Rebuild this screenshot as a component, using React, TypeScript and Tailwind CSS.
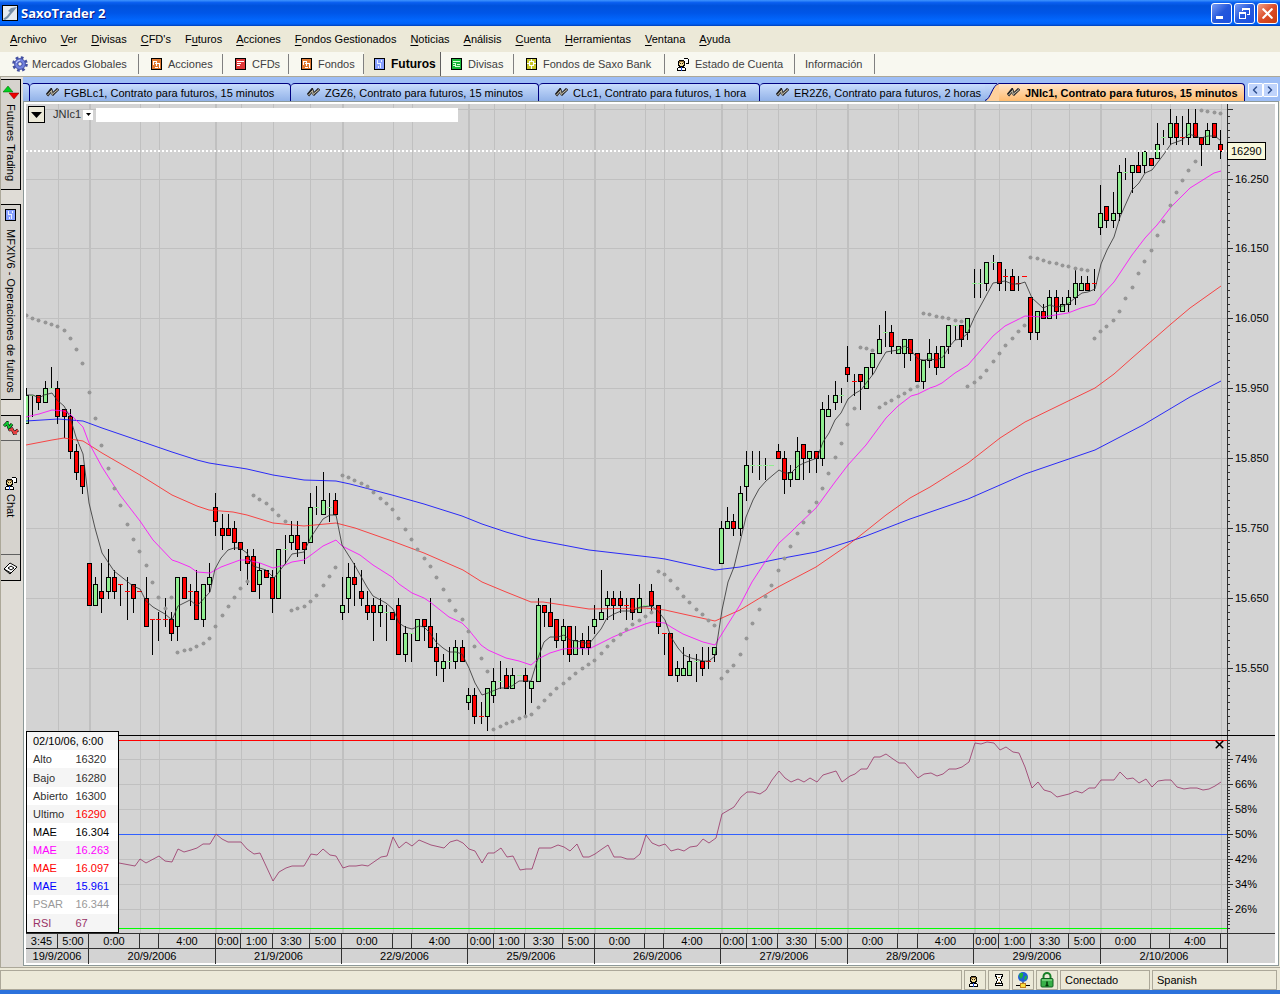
import type { ReactNode } from "react";
import { ChevronLeft, ChevronRight, X } from "lucide-react";

type Bar = [open: number, high: number, low: number, close: number];

// 15 minute bars, prices in tens (1594 = 15940)
const BARS: Bar[] = [
  [1590, 1595, 1590, 1594], [1594, 1594, 1591, 1594], [1594, 1594, 1592, 1593], [1593, 1596, 1593, 1595], [1595, 1598, 1595, 1595],
  [1595, 1596, 1590, 1591], [1592, 1592, 1588, 1591], [1591, 1592, 1585, 1586], [1586, 1587, 1582, 1583], [1584, 1584, 1580, 1581],
  // 20/9
  [1570, 1570, 1564, 1564], [1564, 1568, 1564, 1567], [1566, 1570, 1563, 1565], [1566, 1572, 1565, 1568], [1568, 1569, 1565, 1566],
  [1567, 1567, 1564, 1567], [1566, 1568, 1562, 1566], [1567, 1567, 1563, 1565], [1566, 1566, 1566, 1566], [1565, 1568, 1561, 1561],
  [1562, 1562, 1557, 1562], [1562, 1563, 1559, 1562], [1562, 1565, 1561, 1562], [1562, 1563, 1559, 1560], [1561, 1568, 1559, 1568],
  [1568, 1568, 1565, 1565], [1566, 1567, 1564, 1566], [1566, 1569, 1562, 1562], [1562, 1567, 1561, 1567], [1567, 1570, 1566, 1568],
  // 21/9
  [1578, 1580, 1574, 1576], [1575, 1577, 1572, 1574], [1575, 1577, 1574, 1574], [1575, 1576, 1572, 1573], [1573, 1573, 1569, 1572],
  [1571, 1572, 1567, 1570], [1571, 1572, 1566, 1566], [1567, 1570, 1565, 1569], [1569, 1569, 1568, 1568], [1568, 1569, 1563, 1565],
  [1565, 1572, 1565, 1572], [1572, 1574, 1570, 1572], [1573, 1576, 1572, 1574], [1574, 1576, 1571, 1572], [1573, 1573, 1570, 1572],
  [1573, 1580, 1573, 1578], [1578, 1581, 1577, 1578], [1577, 1583, 1577, 1579], [1578, 1580, 1576, 1578], [1579, 1580, 1577, 1577],
  // 22/9
  [1563, 1568, 1562, 1564], [1565, 1570, 1563, 1568], [1568, 1570, 1564, 1567], [1566, 1569, 1564, 1565], [1564, 1566, 1562, 1563],
  [1564, 1565, 1559, 1563], [1563, 1565, 1561, 1564], [1563, 1564, 1559, 1563], [1563, 1563, 1562, 1562], [1564, 1565, 1557, 1557],
  [1557, 1561, 1556, 1560], [1560, 1560, 1556, 1560], [1559, 1562, 1559, 1562], [1562, 1562, 1559, 1561], [1561, 1565, 1558, 1558],
  [1558, 1560, 1554, 1556], [1555, 1557, 1553, 1556], [1556, 1558, 1555, 1556], [1556, 1559, 1555, 1558], [1558, 1559, 1556, 1556],
  // 25/9
  [1550, 1552, 1549, 1551], [1551, 1552, 1547, 1548], [1548, 1550, 1547, 1548], [1548, 1552, 1546, 1552], [1551, 1555, 1550, 1553],
  [1553, 1556, 1552, 1553], [1554, 1555, 1552, 1552], [1552, 1555, 1552, 1554], [1554, 1554, 1554, 1554], [1554, 1555, 1548, 1553],
  [1552, 1553, 1550, 1553], [1553, 1565, 1553, 1564], [1564, 1564, 1561, 1563], [1563, 1565, 1561, 1561], [1562, 1562, 1558, 1559],
  [1559, 1562, 1557, 1561], [1561, 1561, 1556, 1557], [1557, 1561, 1557, 1559], [1559, 1560, 1557, 1558], [1559, 1561, 1557, 1558],
  // 26/9
  [1561, 1564, 1560, 1562], [1562, 1569, 1562, 1563], [1564, 1566, 1562, 1565], [1565, 1566, 1562, 1564], [1565, 1566, 1563, 1564],
  [1564, 1565, 1562, 1564], [1565, 1565, 1562, 1563], [1563, 1567, 1563, 1565], [1564, 1564, 1564, 1564], [1566, 1567, 1563, 1564],
  [1564, 1564, 1560, 1561], [1560, 1560, 1557, 1560], [1560, 1560, 1554, 1554], [1554, 1556, 1553, 1555], [1554, 1558, 1554, 1555],
  [1554, 1557, 1554, 1556], [1556, 1557, 1553, 1556], [1556, 1558, 1554, 1555], [1556, 1558, 1555, 1556], [1557, 1558, 1556, 1558],
  // 27/9
  [1570, 1576, 1570, 1575], [1575, 1578, 1575, 1576], [1576, 1577, 1574, 1575], [1575, 1581, 1574, 1580], [1581, 1586, 1579, 1584],
  [1584, 1586, 1583, 1584], [1584, 1586, 1582, 1584], [1584, 1585, 1582, 1584], [1584, 1584, 1584, 1584], [1586, 1587, 1585, 1585],
  [1585, 1586, 1580, 1582], [1582, 1584, 1581, 1583], [1582, 1588, 1582, 1586], [1587, 1587, 1582, 1585], [1585, 1586, 1583, 1586],
  [1586, 1586, 1583, 1585], [1585, 1593, 1584, 1592], [1591, 1594, 1591, 1592], [1593, 1596, 1592, 1594], [1594, 1595, 1593, 1594],
  // 28/9
  [1598, 1601, 1596, 1597], [1596, 1597, 1594, 1596], [1597, 1597, 1592, 1596], [1595, 1598, 1595, 1598], [1598, 1600, 1597, 1600],
  [1600, 1604, 1600, 1602], [1603, 1606, 1601, 1603], [1603, 1604, 1600, 1601], [1600, 1601, 1600, 1601], [1600, 1602, 1598, 1602],
  [1602, 1602, 1599, 1600], [1600, 1600, 1596, 1596], [1596, 1599, 1595, 1599], [1599, 1602, 1598, 1600], [1600, 1601, 1597, 1598],
  [1598, 1601, 1598, 1601], [1601, 1604, 1600, 1604], [1604, 1604, 1602, 1604], [1604, 1604, 1601, 1602], [1603, 1605, 1602, 1605],
  // 29/9
  [1610, 1612, 1608, 1610], [1610, 1612, 1608, 1610], [1610, 1613, 1609, 1613], [1613, 1614, 1612, 1613], [1613, 1613, 1609, 1610],
  [1611, 1612, 1609, 1611], [1611, 1612, 1609, 1609], [1610, 1611, 1609, 1610], [1611, 1611, 1611, 1611], [1608, 1608, 1602, 1603],
  [1603, 1606, 1602, 1606], [1606, 1607, 1605, 1605], [1605, 1609, 1605, 1608], [1608, 1609, 1605, 1606], [1606, 1608, 1606, 1607],
  [1607, 1609, 1606, 1608], [1608, 1612, 1607, 1610], [1609, 1611, 1609, 1610], [1610, 1611, 1609, 1609], [1610, 1612, 1609, 1610],
  // 2/10
  [1618, 1624, 1617, 1620], [1621, 1621, 1618, 1619], [1619, 1623, 1618, 1620], [1620, 1627, 1619, 1626], [1626, 1628, 1625, 1626],
  [1626, 1627, 1623, 1627], [1627, 1629, 1626, 1626], [1627, 1629, 1626, 1629], [1628, 1628, 1627, 1627], [1628, 1633, 1628, 1630],
  [1631, 1632, 1630, 1631], [1631, 1635, 1630, 1633], [1633, 1634, 1630, 1631], [1631, 1634, 1630, 1631], [1631, 1635, 1630, 1633],
  [1633, 1635, 1631, 1631], [1631, 1631, 1627, 1630], [1630, 1633, 1630, 1632], [1633, 1633, 1631, 1631], [1630, 1632, 1628, 1629],
];

// parabolic SAR, one dot for each bar
const PSAR = [
  315, 318, 320, 322, 324, 326, 330, 338, 349, 363, 392, 418, 445, 468, 488, 505, 524, 539, 551, 565,
  582, 597, 608, 597, 652, 650, 649, 646, 643, 638, 626, 615, 606, 597, 588, 581, 495, 499, 503, 509,
  515, 521, 610, 608, 606, 601, 595, 585, 576, 567, 475, 477, 480, 483, 486, 492, 498, 503, 509, 518,
  529, 539, 549, 558, 566, 577, 589, 600, 610, 619, 631, 646, 658, 671, 729, 726, 723, 721, 718, 716,
  714, 707, 700, 694, 688, 683, 678, 673, 668, 664, 660, 653, 646, 640, 634, 629, 624, 620, 616, 612,
  571, 574, 580, 588, 596, 602, 609, 614, 620, 625, 678, 671, 665, 654, 638, 623, 609, 596, 585, 570,
  558, 546, 533, 522, 511, 502, 488, 473, 457, 443, 424, 408, 347, 348, 350, 407, 403, 400, 396, 393,
  389, 386, 313, 314, 316, 317, 318, 320, 321, 386, 382, 377, 370, 361, 353, 345, 338, 331, 325, 257,
  258, 260, 262, 263, 265, 266, 268, 269, 270, 338, 331, 326, 320, 311, 298, 287, 273, 261, 250, 235,
  221, 205, 192, 180, 170, 161, 110, 111, 112, 113,
];

const AVERAGES = [
  {
    color: "#0000ff",
    points:
      "26,421 58,419 83,421 102,428 140,441 172,452 197,460 209,463 247,469 273,475 304,480 336,481 350,484 392,495 424,504 462,516 482,524 506,532 531,539 563,545 589,550 658,558 665,559 683,563 715,570 740,567 778,559 816,552 848,542 866,536 910,519 968,499 1000,485 1025,474 1095,450 1143,425 1190,397 1221,381",
  },
  {
    color: "#ff2020",
    points:
      "26,445 52,440 64,438 70,439 83,441 102,453 140,475 172,495 197,506 209,510 233,512 247,515 273,523 304,526 336,523 355,528 392,541 424,553 463,570 482,582 506,592 531,602 543,602 563,605 589,609 645,608 665,610 683,614 715,621 740,610 778,587 816,567 848,545 866,531 886,515 910,498 930,487 968,463 1000,438 1025,422 1095,388 1114,374 1132,358 1171,324 1190,308 1221,286",
  },
  {
    color: "#ff00ff",
    points:
      "26,417 39,414 52,410 64,411 70,414 83,427 89,443 102,467 120,495 140,521 153,540 172,560 178,562 190,567 197,572 210,573 221,567 240,560 247,560 260,563 273,568 285,565 292,562 304,560 311,555 323,546 336,540 342,546 360,555 373,565 392,577 399,584 412,593 424,598 430,602 449,617 462,623 468,629 481,645 488,650 506,658 519,661 531,665 538,659 544,656 550,653 563,649 575,648 589,649 601,643 613,637 627,631 645,624 652,622 665,623 671,627 683,634 703,642 715,645 728,624 740,605 752,582 765,562 779,543 791,532 798,525 816,508 835,482 848,465 866,445 886,418 898,406 911,396 918,394 930,388 936,386 942,383 955,373 968,365 981,350 993,336 1005,326 1025,316 1043,317 1068,313 1081,308 1095,304 1101,296 1114,282 1132,255 1145,238 1157,225 1171,207 1182,196 1190,188 1214,173 1221,171",
  },
  {
    color: "#303030",
    points:
      "26,395 33,395 39,398 44,395 52,393 57,400 64,406 70,417 76,437 83,454 89,503 95,528 102,553 114,571 133,586 140,589 146,601 153,607 158,610 165,614 172,620 178,606 190,600 197,606 210,592 215,569 221,558 228,550 234,548 240,548 247,553 253,566 266,570 274,578 285,564 292,554 304,552 311,537 323,519 330,515 336,515 342,545 354,564 367,587 373,596 386,603 393,609 399,623 405,627 412,629 419,626 424,627 430,633 436,642 443,648 449,652 456,652 462,654 469,668 475,683 482,695 488,693 500,688 506,688 512,686 519,681 531,681 538,658 544,642 550,637 558,637 564,635 570,640 582,642 589,644 601,629 607,618 614,614 621,611 633,611 640,607 652,606 658,611 665,620 671,637 678,648 684,655 691,658 703,661 709,661 715,656 722,610 728,582 734,567 740,542 746,517 753,500 759,489 766,481 773,475 779,470 785,473 791,473 798,466 804,463 817,458 823,442 829,433 835,420 841,413 848,399 854,394 861,390 867,382 874,373 880,362 886,352 898,350 905,346 910,349 918,359 924,360 930,359 937,360 943,357 949,347 955,340 961,339 967,334 975,316 981,305 993,283 1005,281 1012,284 1019,284 1025,282 1032,298 1043,308 1050,305 1056,307 1063,306 1069,303 1075,298 1082,293 1088,292 1095,289 1101,264 1107,250 1114,237 1120,217 1132,190 1139,183 1145,173 1152,170 1158,162 1164,154 1171,144 1182,140 1189,134 1201,138 1208,136 1215,136 1221,141",
  },
];

const RSI =
  "119,863 135,866 140,859 146,863 159,856 165,861 172,862 178,849 184,852 191,850 197,848 203,844 210,844 216,834 222,839 228,842 241,842 247,849 254,854 260,853 273,881 279,872 286,868 292,866 304,866 311,854 317,855 323,849 330,855 336,856 343,868 349,866 356,866 362,865 368,866 381,857 387,856 393,837 399,848 406,842 412,846 419,840 431,845 444,848 450,842 457,840 463,843 469,849 475,851 482,863 488,853 494,853 501,848 507,857 513,856 520,870 526,869 532,869 539,848 551,848 558,845 564,847 570,851 577,844 583,857 589,857 595,854 602,849 608,845 614,857 621,857 627,859 634,859 640,854 646,835 652,843 659,846 665,844 671,851 678,849 684,851 690,847 697,846 703,839 709,843 716,838 722,814 734,807 741,797 747,792 753,792 760,794 766,790 772,780 779,771 785,778 791,782 798,779 804,782 810,778 817,782 823,775 836,771 842,782 850,776 855,774 861,769 867,769 874,757 880,757 886,754 893,759 899,763 905,763 918,778 924,774 931,773 937,776 943,774 949,769 956,769 962,767 969,762 975,743 981,744 987,742 994,743 1000,750 1006,747 1013,752 1019,753 1025,767 1032,788 1038,782 1044,790 1051,792 1057,797 1069,794 1076,791 1082,793 1089,788 1095,788 1101,780 1114,780 1120,772 1127,779 1133,778 1139,783 1146,779 1152,787 1158,781 1165,780 1171,780 1177,787 1184,789 1190,788 1197,788 1203,790 1209,789 1215,786 1221,782";

const DAY_LINES = [90, 216, 343, 469, 595, 722, 848, 975, 1101];
const HOUR_LINES = [58, 140, 159, 241, 273, 310, 393, 412, 494, 525, 563, 645, 664, 747, 778, 816, 898, 918, 999, 1031, 1069, 1151, 1170, 1221];

const PRICES = [1625, 1615, 1605, 1595, 1585, 1575, 1565, 1555];
const PERCENTS = [74, 66, 58, 50, 42, 34, 26];

const HOURS = [
  "3:45", "5:00", "0:00", "", "4:00", "0:00", "1:00", "3:30", "5:00", "0:00", "", "4:00", "0:00", "1:00", "3:30", "5:00", "0:00",
  "", "4:00", "0:00", "1:00", "3:30", "5:00", "0:00", "", "4:00", "0:00", "1:00", "3:30", "5:00", "0:00", "", "4:00", "",
];
const DAYS = ["19/9/2006", "20/9/2006", "21/9/2006", "22/9/2006", "25/9/2006", "26/9/2006", "27/9/2006", "28/9/2006", "29/9/2006", "2/10/2006"];

const priceY = (p: number) => Math.floor(179 + (1625 - p) * 6.986);
const percentY = (p: number) => Math.floor(759 + (74 - p) * 3.13);
const barX = (i: number) => Math.floor(89.3 + (i - 10) * 6.32);

const MENU = [
  ["", "A", "rchivo"], ["", "V", "er"], ["", "D", "ivisas"], ["", "C", "FD's"], ["F", "u", "turos"], ["", "A", "cciones"],
  ["", "F", "ondos Gestionados"], ["", "N", "oticias"], ["", "A", "nálisis"], ["", "C", "uenta"], ["", "H", "erramientas"],
  ["", "V", "entana"], ["", "A", "yuda"],
];

const READOUT = [
  ["Alto", "16320", "text-[#303030]", "text-[#303030]"],
  ["Bajo", "16280", "text-[#303030]", "text-[#303030]"],
  ["Abierto", "16300", "text-[#303030]", "text-[#303030]"],
  ["Ultimo", "16290", "text-[#303030]", "text-[#ff0000]"],
  ["MAE", "16.304", "text-black", "text-black"],
  ["MAE", "16.263", "text-[#ff00ff]", "text-[#ff00ff]"],
  ["MAE", "16.097", "text-[#ff0000]", "text-[#ff0000]"],
  ["MAE", "15.961", "text-[#0000ff]", "text-[#0000ff]"],
  ["PSAR", "16.344", "text-[#999999]", "text-[#999999]"],
  ["RSI", "67", "text-[#993366]", "text-[#993366]"],
];

function GearIcon() {
  return (
    <svg width="16" height="16" viewBox="0 0 16 16">
      <circle cx="8" cy="8" r="6.3" fill="none" stroke="#4450a0" strokeWidth="3" strokeDasharray="2.6 2.35" />
      <circle cx="8" cy="8" r="5.4" fill="#7484e0" stroke="#4854a8" />
      <circle cx="8" cy="8" r="2.2" fill="#f8f8f0" stroke="#38449c" />
      <path d="M4.2 7A4 4 0 0 1 8 4.2" stroke="#c8d0ff" fill="none" />
    </svg>
  );
}

function SquareIcon({ fill, line, d }: { fill: string; line: string; d: string }) {
  return (
    <svg width="11" height="12" viewBox="0 0 11 12" shapeRendering="crispEdges">
      <rect x="0.5" y="0.5" width="10" height="11" fill={fill} stroke="#000" />
      <path d={d} stroke={line} fill="none" />
    </svg>
  );
}

const FundIcon = () => <SquareIcon fill="#e07830" line="#fff" d="M2 3.5h4M2.5 3v4M5.5 4v4M4 5.5h5M8.5 5v5M4 9.5h3" />;
const CfdIcon = () => <SquareIcon fill="#e03838" line="#fff" d="M2 3.5h7M2 5.5h4M2 7.5h3" />;
const FutureIcon = () => <SquareIcon fill="#88a0ff" line="#e8f0ff" d="M3.5 2v4M4 5.5h3M6.5 5v5M7.5 2v2M4.5 8v2" />;
const ForexIcon = () => <SquareIcon fill="#18b838" line="#d8ffd8" d="M2 3.5h7M2 5.5h3M4.5 5v4M5 8.5h4M6 6.5h3M2 7.5h2" />;
const SaxoFundIcon = () => <SquareIcon fill="#c8c828" line="#fff" d="M3.5 3.5h4v4h-4zM5.5 1v2M5.5 8v3M1 5.5h2M8 5.5h2" />;

function PersonIcon({ note = false }: { note?: boolean }) {
  return (
    <svg width="12" height="13" viewBox="0 0 12 13" shapeRendering="crispEdges">
      {note && <path d="M6.500 0.500h4l1 1v4h-3" fill="#fff" stroke="#000" />}
      <path d="M2 2h5v1h1v5h-1v1h-5v-1h-1v-5h1z" fill="#000" />
      <path d="M2 3h5v2h-5z" fill="#806030" />
      <path d="M3 4h3v4h-3zM2 5h5v2h-5z" fill="#f0d890" />
      <path d="M3 5h1v1h-1zM5 5h1v1h-1z" fill="#302010" />
      <path d="M0 13v-3h1v-1h7v1h1v3z" fill="#000" />
      <path d="M1 12v-2h7v2z" fill="#fff" />
      <path d="M4 9h1v4h-1z" fill="#2050e0" />
    </svg>
  );
}

function StripesIcon() {
  return (
    <svg width="14" height="9" viewBox="0 0 14 9">
      <path d="M1 7l4-5 1 3M6 7l6-6" stroke="#202020" strokeWidth="3" fill="none" />
      <path d="M1.5 8l4-5 1 3 6-5" stroke="#404040" strokeWidth="2" fill="none" />
      <path d="M1.500 7l4-4.500 0.500 4 6-5" stroke="#c8c0a8" strokeWidth="1" fill="none" />
    </svg>
  );
}

const TOOLS: { label: string; icon?: ReactNode; width: string; active?: boolean }[] = [
  { label: "Mercados Globales", icon: <GearIcon />, width: "w-[139px] gap-1 pl-3" },
  { label: "Acciones", icon: <FundIcon />, width: "w-[84px] gap-1.5 pl-3" },
  { label: "CFDs", icon: <CfdIcon />, width: "w-[66px] gap-1.5 pl-3" },
  { label: "Fondos", icon: <FundIcon />, width: "w-[75px] gap-1.5 pl-3" },
  { label: "Futuros", icon: <FutureIcon />, width: "w-[77px] gap-1.5 pl-2.5", active: true },
  { label: "Divisas", icon: <ForexIcon />, width: "w-[73px] gap-1.5 pl-2.5" },
  { label: "Fondos de Saxo Bank", icon: <SaxoFundIcon />, width: "w-[151px] gap-1.5 pl-3" },
  { label: "Estado de Cuenta", icon: <PersonIcon note />, width: "w-[130px] gap-1.5 pl-3" },
  { label: "Información", width: "w-[80px] pl-2.5" },
];

const TABS = [
  { label: "FGBLc1, Contrato para futuros, 15 minutos", width: "w-[261px]" },
  { label: "ZGZ6, Contrato para futuros, 15 minutos", width: "w-[248px]" },
  { label: "CLc1, Contrato para futuros, 1 hora", width: "w-[221px]" },
  { label: "ER2Z6, Contrato para futuros, 2 horas", width: "w-[225px]" },
];

function TitleBar() {
  const button = "flex size-[21px] items-center justify-center rounded-[3px] border border-white";
  return (
    <header className="flex h-[26px] items-center bg-[linear-gradient(#3f95fe_0%,#0a5ff0_10%,#0052dc_22%,#0056e8_50%,#0268ff_80%,#0062f8_92%,#0040b8_100%)] pr-[2px] pl-[2px]">
      <svg width="16" height="16" viewBox="0 0 16 16">
        <rect x="0.5" y="0.5" width="15" height="15" fill="#e4eaf0" stroke="#000" />
        <path d="M1 14l4-3 3-4-2-1 3-3 6-1-4 5-1 1-4 5-3 2z" fill="#7890a8" />
      </svg>
      <h1 className="ml-[3px] flex-1 font-['Open_Sans',sans-serif] text-[13px] leading-5 font-bold text-white [text-shadow:1px_1px_#0a1883]">SaxoTrader 2</h1>
      <div className="flex gap-[2px]">
        <button aria-label="Minimizar" className={`${button} bg-[linear-gradient(135deg,#7a9cf4,#2458dc_50%,#1c50e0)]`}>
          <span className="mt-2 mr-1 h-[3px] w-[7px] bg-white" />
        </button>
        <button aria-label="Restaurar" className={`${button} bg-[linear-gradient(135deg,#7a9cf4,#2458dc_50%,#1c50e0)]`}>
          <svg width="13" height="13" viewBox="0 0 13 13" fill="none" stroke="#fff" shapeRendering="crispEdges">
            <path d="M4.5 4v-2.5h7v6h-3M4 2.500h8" />
            <path d="M1.5 5.5h6v6h-6zM1 6.5h7" />
          </svg>
        </button>
        <button aria-label="Cerrar" className={`${button} bg-[linear-gradient(135deg,#f0a088,#dc4c28_50%,#c83c10)] text-white`}>
          <X size={17} strokeWidth={3} />
        </button>
      </div>
    </header>
  );
}

function Toolbar() {
  return (
    <nav className="flex h-[25px] border-b border-[#aca899] bg-[#f8f8f0]">
      {TOOLS.map((tool) => (
        <button
          key={tool.label}
          className={`flex shrink-0 items-center whitespace-nowrap ${tool.width} ${
            tool.active
              ? "border-r border-[#606060] bg-[#ece9d8] text-[12px] font-bold text-black"
              : "my-[2px] border-r border-[#808080] text-[#404040]"
          }`}
        >
          {tool.icon}
          {tool.label}
        </button>
      ))}
    </nav>
  );
}

function Sidebar() {
  const tab = "flex w-5 items-center border border-l-0 border-black bg-[#d6d3ce] [writing-mode:vertical-rl]";
  return (
    <aside className="flex w-[23px] shrink-0 flex-col border-l border-[#aca899] bg-[#dfdcd6] pt-0.5">
      <button className={`${tab} h-[111px] gap-1 pt-1`}>
        <svg width="16" height="16" viewBox="0 0 16 16">
          <path d="M0 8l5-6 5 6z" fill="#00d020" stroke="#006000" strokeWidth="0.5" />
          <path d="M6 9h10l-5 6z" fill="#f00000" stroke="#700000" strokeWidth="0.5" />
        </svg>
        Futures Trading
      </button>
      <button className={`${tab} mt-3.5 h-[196px] gap-2 pt-1`}>
        <FutureIcon />
        MFXIV6 - Operaciones de futuros
      </button>
      <div className="mt-[15px] flex w-5 flex-col border border-l-0 border-black bg-[#d6d3ce]">
        <button aria-label="Operaciones" className="flex h-[25px] items-center justify-center border-b border-[#606060]">
          <svg width="16" height="14" viewBox="0 0 16 14" fill="none">
            <path d="M1 5l3-3 2 5 3-4M3 2h3" stroke="#000" strokeWidth="3" />
            <path d="M1 5l3-3 2 5 3-4M3 2h3" stroke="#10c030" strokeWidth="2" />
            <path d="M6 9l3-1 2 4 4-3M10 12h4" stroke="#000" strokeWidth="3" />
            <path d="M6 9l3-1 2 4 4-3M10 12h4" stroke="#e84040" strokeWidth="2" />
          </svg>
        </button>
        <button className="flex h-[114px] items-center justify-center gap-1 border-b border-[#606060] [writing-mode:vertical-rl]">
          <PersonIcon note />
          Chat
        </button>
        <button aria-label="Notas" className="flex h-[25px] items-center justify-center">
          <svg width="15" height="14" viewBox="0 0 15 14">
            <path d="M1 8l6-6 7 4-6 6z" fill="#fff" stroke="#000" />
            <path d="M5 7l3-2 3 2-3 2zM1 8l6 5 1-1" fill="none" stroke="#000" />
          </svg>
        </button>
      </div>
    </aside>
  );
}

function ChartTabs() {
  const arrow = "flex h-[14px] w-[15px] items-center justify-center rounded-[1px] border border-white bg-[#c0d4fc] text-[#305090]";
  return (
    <nav className="flex h-[24px] items-end overflow-hidden bg-[#9ebef6] pt-1.5">
      <div className="h-full w-[7px] shrink-0 rounded-tr-[4px] border-t border-r border-[#000080] bg-[linear-gradient(#c4d8fa,#96b6ea)]" />
      {TABS.map((tab, i) => (
        <button
          key={tab.label}
          className={`flex h-full shrink-0 items-center gap-1 overflow-hidden rounded-tl-[4px] border-t border-[#000080] bg-[linear-gradient(#c8dcfc,#92b2e8)] pl-4 whitespace-nowrap ${tab.width} ${
            i < TABS.length - 1 ? "rounded-tr-[4px] border-r" : ""
          }`}
        >
          <StripesIcon />
          {tab.label}
        </button>
      ))}
      <button className="flex h-full min-w-0 flex-1 items-stretch text-left font-bold whitespace-nowrap">
        <svg width="14" height="18" viewBox="0 0 14 18" className="shrink-0 bg-[linear-gradient(#c8dcfc,#92b2e8)]">
          <path d="M1 18C6 15 8 2 14 0.5V18z" fill="#ffd09c" />
          <path d="M0 0.5h12M0 17.5C6 16 7 2 14 0.5" fill="none" stroke="#000080" />
        </svg>
        <span className="flex min-w-0 flex-1 items-center gap-1 rounded-tr-[4px] border-t border-r border-[#000080] bg-[linear-gradient(#ffe4c8,#ffbc70)] pl-2">
          <StripesIcon />
          JNIc1, Contrato para futuros, 15 minutos
        </span>
      </button>
      <div className="flex h-full w-[35px] shrink-0 justify-center">
        <button aria-label="Anterior" className={arrow}><ChevronLeft size={12} strokeWidth={3} /></button>
        <button aria-label="Siguiente" className={arrow}><ChevronRight size={12} strokeWidth={3} /></button>
      </div>
    </nav>
  );
}

function GridColumns({ top, bottom }: { top: number; bottom: number }) {
  return (
    <g stroke="#c0c0c0" shapeRendering="crispEdges">
      {DAY_LINES.map((x) => <line key={x} x1={x} x2={x} y1={top} y2={bottom} strokeWidth="2" />)}
      {HOUR_LINES.map((x) => <line key={x} x1={x + 0.5} x2={x + 0.5} y1={top} y2={bottom} />)}
    </g>
  );
}

function PricePlot() {
  // a bar that closes where it opened keeps the colour of the bar before it
  let up = true;
  const candles = BARS.map(([open, high, low, close], i) => {
    if (close !== open) up = close > open;
    const x = barX(i);
    const top = priceY(Math.max(open, close));
    const bottom = priceY(Math.min(open, close));
    const fill = up ? "#90ee90" : "#ff0000";
    return (
      <g key={i}>
        {high !== low && <rect x={x} y={priceY(high)} width="1" height={priceY(low) - priceY(high) + 1} fill="#000" />}
        {open === close ? (
          <rect x={x - 2} y={top} width="5" height="1" fill={fill} />
        ) : (
          <rect x={x - 1.5} y={top + 0.5} width="4" height={bottom - top} fill={fill} stroke="#000" />
        )}
      </g>
    );
  });

  return (
    <svg className="h-[631px] min-w-0 flex-1" viewBox="26 104 1201 631" preserveAspectRatio="none">
      <GridColumns top={104} bottom={735} />
      <g fill="#c0c0c0" shapeRendering="crispEdges">
        {[1635, ...PRICES].map((p) => <rect key={p} x="26" y={priceY(p)} width="1201" height="1" />)}
      </g>
      <g shapeRendering="crispEdges">{candles}</g>
      {AVERAGES.map((line) => (
        <polyline key={line.color} points={line.points} fill="none" stroke={line.color} strokeWidth="1" strokeOpacity="0.8" />
      ))}
      <g fill="#969696">
        {PSAR.map((y, i) => <circle key={i} cx={barX(i) + 0.5} cy={y + 0.5} r="2" />)}
      </g>
      <line x1="26" x2="1227" y1="151" y2="151" stroke="#fff" strokeWidth="2" strokeDasharray="2 2" shapeRendering="crispEdges" />
    </svg>
  );
}

function PriceAxis() {
  const minor = Array.from({ length: 90 }, (_, i) => priceY(1635 - i));
  return (
    <svg className="h-[631px] w-12 shrink-0" viewBox="1227 104 48 631">
      <g fill="#303030" shapeRendering="crispEdges">
        <rect x="1227" y="104" width="1" height="631" />
        {minor.map((y) => <rect key={y} x="1228" y={y} width="2" height="1" />)}
        {[1635, ...PRICES].map((p) => <rect key={p} x="1228" y={priceY(p)} width="5" height="1" />)}
      </g>
      {PRICES.map((p) => (
        <text key={p} x="1235" y={priceY(p) + 4} className="text-[11px]">{(p / 100).toFixed(2)}0</text>
      ))}
      <rect x="1227.5" y="142.5" width="38" height="17" fill="#f8f8dc" stroke="#000" shapeRendering="crispEdges" />
      <text x="1231" y="155" className="text-[11px]">16290</text>
    </svg>
  );
}

function RsiPlot() {
  return (
    <svg className="h-[197px] min-w-0 flex-1" viewBox="26 736 1201 197" preserveAspectRatio="none">
      <GridColumns top={736} bottom={933} />
      <g shapeRendering="crispEdges">
        {PERCENTS.map((p) => (
          <rect key={p} x="26" y={percentY(p)} width="1201" height="1" fill={p === 50 ? "#3060ff" : "#c0c0c0"} />
        ))}
        <rect x="26" y="740" width="1201" height="1" fill="#ff0000" />
        <rect x="26" y="928" width="1201" height="1" fill="#00ff00" />
      </g>
      <polyline points={RSI} fill="none" stroke="#993366" strokeWidth="1" strokeOpacity="0.8" />
    </svg>
  );
}

function RsiAxis() {
  const minor = Array.from({ length: 61 }, (_, i) => percentY(80 - i));
  return (
    <svg className="h-[197px] w-12 shrink-0" viewBox="1227 736 48 197">
      <g fill="#303030" shapeRendering="crispEdges">
        <rect x="1227" y="736" width="1" height="197" />
        {minor.map((y) => <rect key={y} x="1228" y={y} width="2" height="1" />)}
        {PERCENTS.map((p) => <rect key={p} x="1228" y={percentY(p)} width="5" height="1" />)}
      </g>
      {PERCENTS.map((p) => (
        <text key={p} x="1235" y={percentY(p) + 4} className="text-[11px]">{p}%</text>
      ))}
    </svg>
  );
}

function TimeAxis() {
  return (
    <div className="flex border-t border-[#303030] text-center">
      <div className="min-w-0 flex-1">
        <div className="grid h-[15px] grid-cols-[32fr_31fr_51fr_19fr_57fr_25fr_32fr_37fr_32fr_51fr_19fr_56fr_26fr_31fr_38fr_32fr_50fr_19fr_57fr_26fr_31fr_38fr_32fr_50fr_20fr_56fr_25fr_32fr_38fr_32fr_50fr_19fr_51fr_6fr] border-b border-[#303030] leading-[14px]">
          {HOURS.map((hour, i) => (
            <div key={i} className={`min-w-0 ${i < HOURS.length - 1 ? "border-r border-[#303030]" : ""}`}>{hour}</div>
          ))}
        </div>
        <div className="grid h-[14px] grid-cols-[63fr_127fr_126fr_126fr_127fr_126fr_127fr_126fr_127fr_126fr] leading-[15px]">
          {DAYS.map((day, i) => (
            <div key={day} className={`min-w-0 ${i < DAYS.length - 1 ? "border-r border-[#303030]" : ""}`}>{day}</div>
          ))}
        </div>
      </div>
      <div className="w-12 shrink-0 border-l border-[#303030]" />
    </div>
  );
}

function Readout() {
  return (
    <table className="absolute bottom-0 left-0 h-[202px] w-[93px] border border-black bg-white">
      <tbody>
        <tr className="bg-[#f5f5f5]">
          <th colSpan={2} className="pl-1.5 text-left font-normal">02/10/06, 6:00</th>
        </tr>
        {READOUT.map(([label, value, labelColor, valueColor], i) => (
          <tr key={i} className="odd:bg-[#f5f5f5]">
            <th scope="row" className={`w-[49px] pl-1.5 text-left font-normal ${labelColor}`}>{label}</th>
            <td className={valueColor}>{value}</td>
          </tr>
        ))}
      </tbody>
    </table>
  );
}

function Chart() {
  return (
    <section className="relative border-2 border-r-3 border-white bg-[#d3d3d3]">
      <div className="flex border-b border-black">
        <PricePlot />
        <PriceAxis />
      </div>
      <div className="relative flex">
        <RsiPlot />
        <RsiAxis />
        <Readout />
        <button aria-label="Quitar RSI" className="absolute top-0.5 right-[49px] text-black">
          <X size={13} strokeWidth={3} />
        </button>
      </div>
      <TimeAxis />
      <div className="absolute top-0.5 left-0.5 flex items-center">
        <button aria-label="Opciones del gráfico" className="flex size-[17px] items-center justify-center border border-black bg-[#ece9d8]">
          <svg width="11" height="6" viewBox="0 0 11 6"><path d="M0 0h11L5.5 6z" /></svg>
        </button>
        <label htmlFor="symbol" className="w-[38px] pl-2 leading-[13px] text-[#303030]">JNIc1</label>
        <button aria-label="Elegir instrumento" className="flex h-2.5 w-2.5 items-center justify-center bg-white">
          <svg width="5" height="3" viewBox="0 0 5 3"><path d="M0 0h5L2.5 3z" /></svg>
        </button>
        <input id="symbol" type="text" className="ml-[3px] h-3.5 w-[362px] bg-white px-1 outline-none" />
      </div>
    </section>
  );
}

function StatusBar() {
  const cell = "flex h-5 items-center border border-[#aca899]";
  const iconCell = `${cell} w-[22px] justify-center`;
  return (
    <footer className="flex gap-[2px] border-t border-[#aca899] bg-[#ece9d8] pt-[2px] pr-[3px]">
      <div className={`${cell} flex-1`} />
      <div className={iconCell}><PersonIcon /></div>
      <div className={iconCell}>
        <svg width="8" height="12" viewBox="0 0 8 12" shapeRendering="crispEdges">
          <path d="M0 0h8v3h-1v2h-1v2h1v2h1v3h-8v-3h1v-2h1v-2h-1v-2h-1z" fill="#000" />
          <path d="M1 1h6v1h-6zM2 2h4v3h-1v2h1v2h-4v-2h1v-2h-1zM1 10h6v1h-6z" fill="#fff" />
          <path d="M3 3h2v1h-2zM3 8h2v1h-2z" fill="#a08040" />
        </svg>
      </div>
      <div className={iconCell}>
        <svg width="14" height="16" viewBox="0 0 14 16">
          <circle cx="7" cy="5" r="5" fill="#2060d8" />
          <path d="M4 1l3 0 0 3-2 3-2-3zM9 4l2 0-1 4-2-1z" fill="#20b040" />
          <path d="M7 10v2M0 13.5h14" stroke="#000" />
          <rect x="4.5" y="11.5" width="5" height="4" fill="#f8e040" stroke="#c08020" />
        </svg>
      </div>
      <div className={iconCell}>
        <svg width="14" height="16" viewBox="0 0 14 16">
          <path d="M3.5 7V4.5a3.5 3.5 0 0 1 7 0V7" fill="none" stroke="#188028" strokeWidth="2" />
          <rect x="1" y="6.5" width="12" height="8.5" rx="1" fill="#38b048" stroke="#106020" />
          <path d="M2 8h10" stroke="#a0e8a0" />
          <path d="M7 9.5v4M5.5 13.5h3" stroke="#003808" strokeWidth="1.5" />
        </svg>
      </div>
      <div className={`${cell} w-[90px] pl-1`}>Conectado</div>
      <div className={`${cell} w-[125px] pl-1`}>Spanish</div>
    </footer>
  );
}

export default function App() {
  return (
    <div className="flex min-h-screen flex-col bg-[#ece9d8] font-['Liberation_Sans',Arial,sans-serif] text-[11px] leading-[14px] text-black">
      <TitleBar />
      <nav className="flex h-[26px] items-center pl-[3px]">
        {MENU.map(([before, key, after]) => (
          <button key={before + key + after} className="px-[7px] whitespace-nowrap">
            {before}
            <span className="underline underline-offset-2">{key}</span>
            {after}
          </button>
        ))}
      </nav>
      <Toolbar />
      <main className="flex flex-1">
        <Sidebar />
        <div className="flex min-w-0 flex-1 flex-col">
          <ChartTabs />
          <div className="mr-px border border-[#8c9898]">
            <Chart />
          </div>
        </div>
      </main>
      <StatusBar />
      <div className="h-1 bg-[#2c72dc]" />
    </div>
  );
}
